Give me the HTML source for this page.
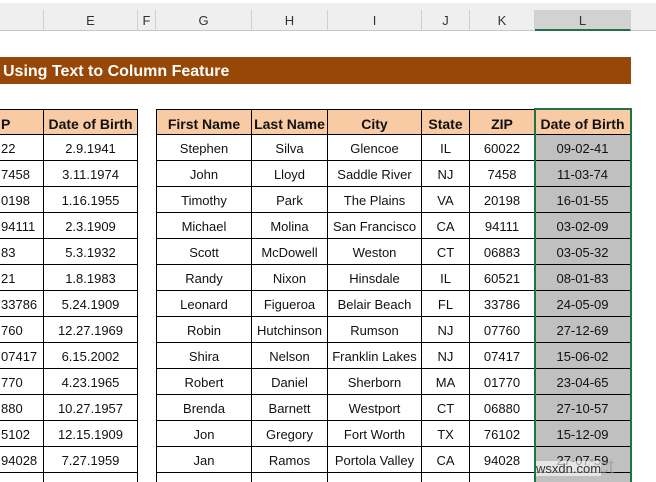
<!DOCTYPE html>
<html style="width:656px;height:482px;overflow:hidden"><head><meta charset="utf-8"><style>
body{margin:0;width:656px;height:482px;overflow:hidden;background:#fff;font-family:"Liberation Sans",Arial,sans-serif;position:relative}
.a{position:absolute}
.hd{position:absolute;top:0;left:0;width:656px;height:31px;background:#efefef;border-top:3px solid #fff;box-sizing:border-box;border-bottom:1px solid #c8c8c8}
.cl{position:absolute;top:10px;height:21px;font-size:13px;color:#333;text-align:center;line-height:22px;border-right:1px solid #d0d0d0;box-sizing:border-box}
.c{position:absolute;height:26px;line-height:28px;font-size:13px;text-align:center;box-sizing:border-box;border-right:1px solid #000;border-bottom:1px solid #000;white-space:nowrap;overflow:hidden;color:#111}
.h{background:#f8cba5;font-weight:bold;font-size:14px}
.g{background:#c0c0c0}
</style></head><body>
<div class="hd"></div>
<div class="cl" style="left:0;width:44px"></div>
<div class="cl" style="left:44px;width:94px">E</div>
<div class="cl" style="left:138px;width:18px">F</div>
<div class="cl" style="left:156px;width:96px">G</div>
<div class="cl" style="left:252px;width:76px">H</div>
<div class="cl" style="left:328px;width:94px">I</div>
<div class="cl" style="left:422px;width:48px">J</div>
<div class="cl" style="left:470px;width:65px">K</div>
<div class="cl" style="left:535px;width:96px;background:#d2d2d2;border-bottom:2px solid #217346">L</div>
<div class="a" style="left:0;top:57px;width:631px;height:27px;background:#974706;color:#fff;font-weight:bold;font-size:16px;line-height:29px;padding-left:3px;box-sizing:border-box">Using Text to Column Feature</div>
<div id="t"></div>
<div class="a" style="left:534px;top:108px;width:98px;height:380px;border:2px solid #217346;box-sizing:border-box"></div>
<div class="a" style="left:585px;top:456px;font-size:20px;color:rgba(150,150,150,0.6)">Act</div>
<div class="a" style="left:536px;top:461px;font-size:13px;color:#333;background:rgba(255,255,255,0.6)">wsxdn.com</div>
<script>
var D=[["P","Date of Birth","First Name","Last Name","City","State","ZIP","Date of Birth"],
["22","2.9.1941","Stephen","Silva","Glencoe","IL","60022","09-02-41"],
["7458","3.11.1974","John","Lloyd","Saddle River","NJ","7458","11-03-74"],
["0198","1.16.1955","Timothy","Park","The Plains","VA","20198","16-01-55"],
["94111","2.3.1909","Michael","Molina","San Francisco","CA","94111","03-02-09"],
["83","5.3.1932","Scott","McDowell","Weston","CT","06883","03-05-32"],
["21","1.8.1983","Randy","Nixon","Hinsdale","IL","60521","08-01-83"],
["33786","5.24.1909","Leonard","Figueroa","Belair Beach","FL","33786","24-05-09"],
["760","12.27.1969","Robin","Hutchinson","Rumson","NJ","07760","27-12-69"],
["07417","6.15.2002","Shira","Nelson","Franklin Lakes","NJ","07417","15-06-02"],
["770","4.23.1965","Robert","Daniel","Sherborn","MA","01770","23-04-65"],
["880","10.27.1957","Brenda","Barnett","Westport","CT","06880","27-10-57"],
["5102","12.15.1909","Jon","Gregory","Fort Worth","TX","76102","15-12-09"],
["94028","7.27.1959","Jan","Ramos","Portola Valley","CA","94028","27-07-59"],
["","","","","","","",""]];
var X=[[0,44],[44,138],[156,252],[252,328],[328,422],[422,470],[470,535],[535,631]];
var h="";
D.forEach(function(r,i){var y=109+i*26;r.forEach(function(v,j){var x=X[j][0],w=X[j][1]-x;var cls="c"+(i==0?" h":"")+(j==7&&i>0?" g":"");var st="left:"+x+"px;top:"+y+"px;width:"+w+"px;";if(i==0)st+="border-top:1px solid #000;";if(j==2)st+="border-left:1px solid #000;";if(j==0)st+="text-align:left;padding-left:1px;";h+='<div class="'+cls+'" style="'+st+'">'+v+'</div>';});});
document.getElementById("t").innerHTML=h;
</script>
</body></html>
